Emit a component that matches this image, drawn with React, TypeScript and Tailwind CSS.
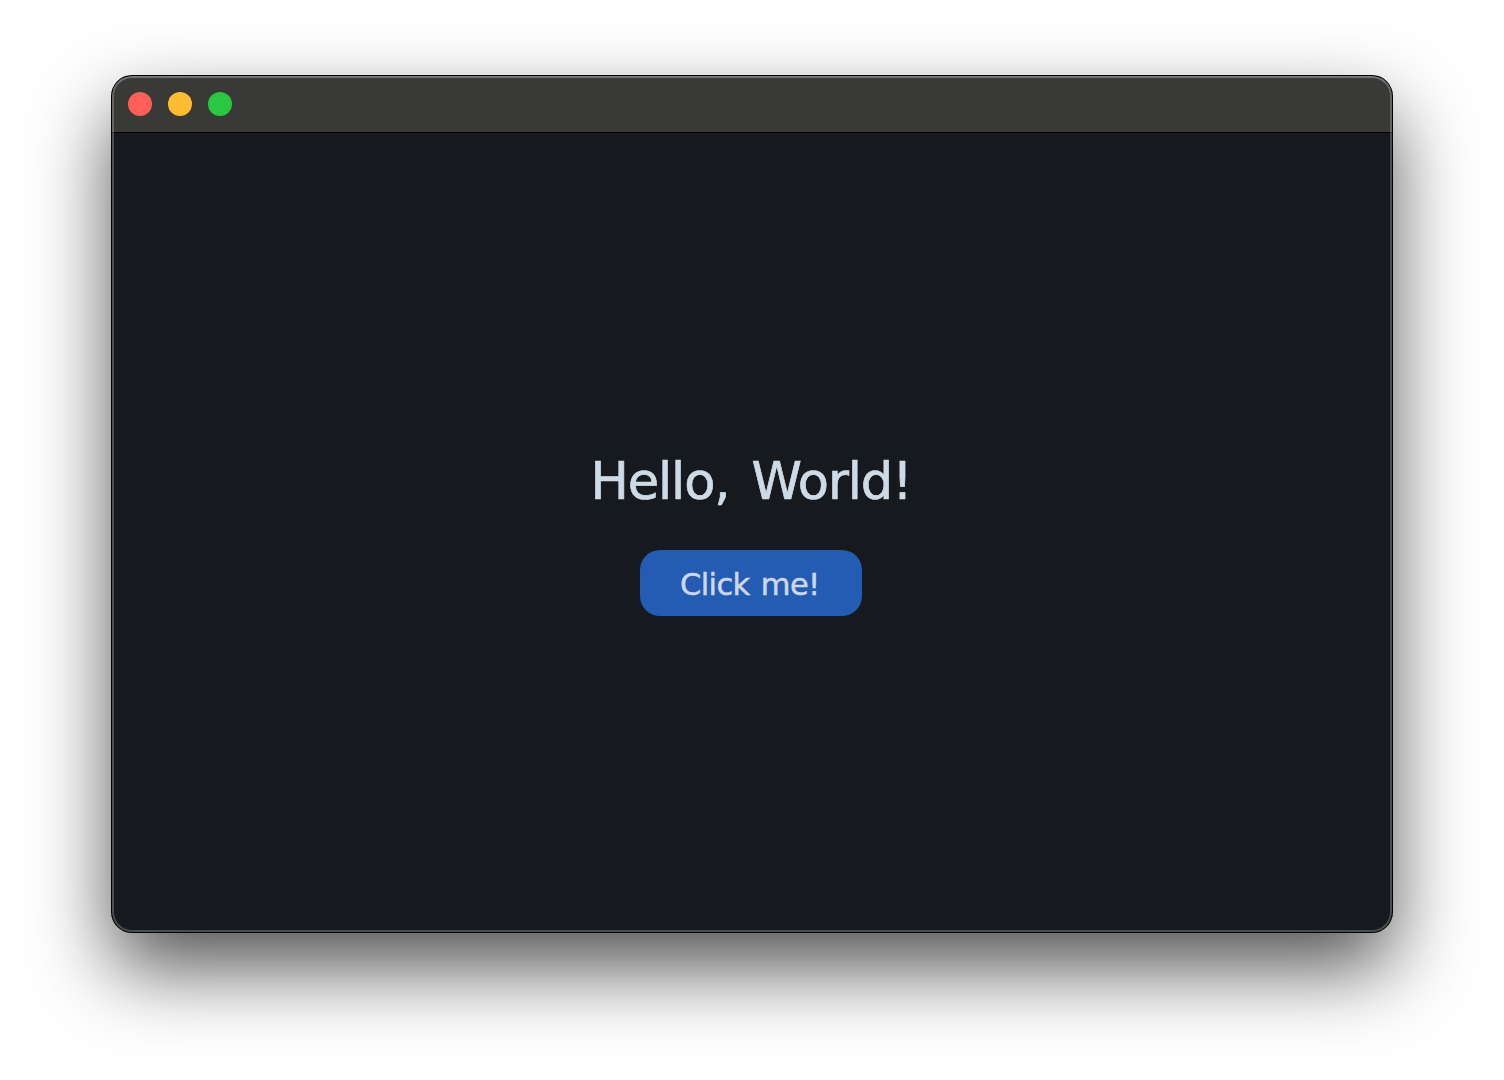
export default function App() {
  return (
    <div className="flex h-[1080px] w-[1504px] items-start justify-center overflow-hidden bg-white pt-[76px] font-['DejaVu_Sans',Verdana,sans-serif]">
      <main className="relative flex h-[856px] w-[1280px] flex-col overflow-hidden rounded-[20px] bg-[#16191d] shadow-[0_0_0_1px_#000,0_36px_80px_rgba(0,0,0,0.68)]">
        <header className="flex h-[57px] shrink-0 items-center gap-4 border-b border-black bg-[#393937] px-4">
          <span className="size-6 rounded-full bg-[#ff5f57]" />
          <span className="size-6 rounded-full bg-[#febc2e]" />
          <span className="size-6 rounded-full bg-[#28c840]" />
        </header>
        <section className="flex flex-1 flex-col items-center pr-0.5 pt-[316px]">
          <h1 className="h-[65px] whitespace-nowrap text-[51px] leading-[65px] tracking-[-1.1px] text-[#cedbe7] [-webkit-text-stroke:0.7px_#cedbe7] [word-spacing:7px]">Hello, World!</h1>
          <button className="mt-9 flex h-[66px] w-[222px] items-center rounded-[20px] bg-[#245bb3] pl-10 pt-[3px] text-[30.5px] tracking-[-0.6px] text-[#ccd8e7] [-webkit-text-stroke:0.5px_#ccd8e7] [word-spacing:2px]">Click me!</button>
        </section>
        <div className="pointer-events-none absolute inset-0 rounded-[20px] border-2 border-white/23 border-t-white/30" />
      </main>
    </div>
  );
}
